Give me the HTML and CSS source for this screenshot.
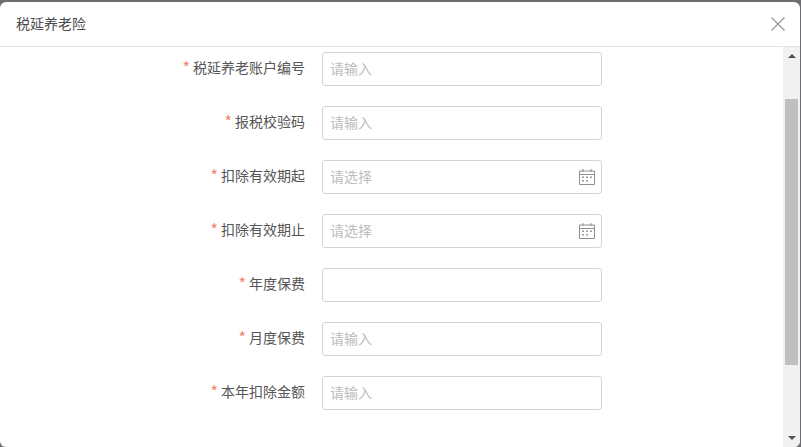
FILE: index.html
```html
<!DOCTYPE html>
<html lang="zh-CN">

<head>
    <meta charset="UTF-8">
    <meta name="viewport" content="width=device-width, initial-scale=1.0">
    <title>税延养老险</title>
    <link rel="stylesheet" href="styles.css">
</head>

<body>

    <div class="dialog">
        <div class="dialog-header">
            <span class="dialog-title">税延养老险</span>
            <svg class="dialog-close" width="14" height="14" viewBox="0 0 14 14">
                <path d="M0.5 0.5L13.5 13.5M13.5 0.5L0.5 13.5" stroke="#909399" stroke-width="1.1" fill="none" />
            </svg>
        </div>

        <div class="dialog-body">
            <div class="form">
                <div class="form-item">
                    <label class="form-label">税延养老账户编号</label>
                    <div class="input"><span class="placeholder">请输入</span></div>
                </div>
                <div class="form-item">
                    <label class="form-label">报税校验码</label>
                    <div class="input"><span class="placeholder">请输入</span></div>
                </div>
                <div class="form-item">
                    <label class="form-label">扣除有效期起</label>
                    <div class="input">
                        <span class="placeholder">请选择</span>
                        <svg class="date-icon" width="18" height="18" viewBox="0 0 18 18">
                            <path d="M1.5 3H16.5V16.5H1.5Z M1.5 6.5H16.5 M5 1V4 M13 1V4" stroke="#8f8f8f" fill="none" />
                            <path d="M4 8.5H6V10H4Z M8 8.5H10V10H8Z M12 8.5H14V10H12Z M4 12H6V13.5H4Z M8 12H10V13.5H8Z" fill="#9a9a9a" />
                        </svg>
                    </div>
                </div>
                <div class="form-item">
                    <label class="form-label">扣除有效期止</label>
                    <div class="input">
                        <span class="placeholder">请选择</span>
                        <svg class="date-icon" width="18" height="18" viewBox="0 0 18 18">
                            <path d="M1.5 3H16.5V16.5H1.5Z M1.5 6.5H16.5 M5 1V4 M13 1V4" stroke="#8f8f8f" fill="none" />
                            <path d="M4 8.5H6V10H4Z M8 8.5H10V10H8Z M12 8.5H14V10H12Z M4 12H6V13.5H4Z M8 12H10V13.5H8Z" fill="#9a9a9a" />
                        </svg>
                    </div>
                </div>
                <div class="form-item">
                    <label class="form-label">年度保费</label>
                    <div class="input"></div>
                </div>
                <div class="form-item">
                    <label class="form-label">月度保费</label>
                    <div class="input"><span class="placeholder">请输入</span></div>
                </div>
                <div class="form-item">
                    <label class="form-label">本年扣除金额</label>
                    <div class="input"><span class="placeholder">请输入</span></div>
                </div>
            </div>

            <div class="scrollbar">
                <div class="arrow-up"></div>
                <div class="scroll-track">
                    <div class="scroll-thumb"></div>
                </div>
                <div class="arrow-down"></div>
            </div>
        </div>
    </div>

</body>

</html>
```

FILE: styles.css
```css
html,
body {
    height: 100%;
}

body {
    margin: 0;
    padding: 2px 1px 0 0;
    box-sizing: border-box;
    overflow: hidden;
    background-color: #6d6d72;
    font-family: "Noto Sans CJK SC", "Liberation Sans", sans-serif;
    font-size: 14px;
    color: #555;
}

.dialog {
    height: 100%;
    display: flex;
    flex-direction: column;
    background-color: #fff;
    border-radius: 6px;
    overflow: hidden;
}

.dialog-header {
    height: 44px;
    flex-shrink: 0;
    display: flex;
    align-items: center;
    justify-content: space-between;
    padding: 0 16px;
    border-bottom: 1px solid #e4e4e4;
}

.dialog-title {
    color: #4a4a4a;
    padding-bottom: 2px;
}

.dialog-close {
    margin-right: -1px;
}

.dialog-body {
    flex: 1;
    display: flex;
    min-height: 0;
}

.form {
    flex: 1;
    padding-top: 5px;
}

.form-item {
    display: flex;
    align-items: center;
    height: 34px;
    margin-bottom: 20px;
}

.form-label {
    width: 305px;
    margin-right: 17px;
    text-align: right;
    line-height: 20px;
    padding-bottom: 4px;
}

.form-label::before {
    content: "*";
    color: #f27f6b;
    font-size: 16px;
    line-height: 14px;
    vertical-align: -1px;
    margin-right: 3px;
}

.input {
    width: 280px;
    height: 34px;
    box-sizing: border-box;
    display: flex;
    align-items: center;
    justify-content: space-between;
    padding: 0 5px 0 8px;
    border: 1px solid #d4d4d4;
    border-radius: 3px;
}

.placeholder {
    color: #bdbdbd;
    margin-left: -1px;
    padding-bottom: 2px;
}

.scrollbar {
    width: 17px;
    display: flex;
    flex-direction: column;
    align-items: center;
    background-color: #f1f1f1;
}

.arrow-up,
.arrow-down {
    width: 0;
    height: 0;
    flex-shrink: 0;
    border-left: 4px solid transparent;
    border-right: 4px solid transparent;
}

.arrow-up {
    margin: 7px 0 5px;
    border-bottom: 4px solid #505050;
}

.arrow-down {
    margin: 5px 0 7px;
    border-top: 4px solid #505050;
}

.scroll-track {
    flex: 1;
    width: 100%;
    box-sizing: border-box;
    padding: 36px 2px 66px;
}

.scroll-thumb {
    height: 100%;
    background-color: #bfbfbf;
}
```
